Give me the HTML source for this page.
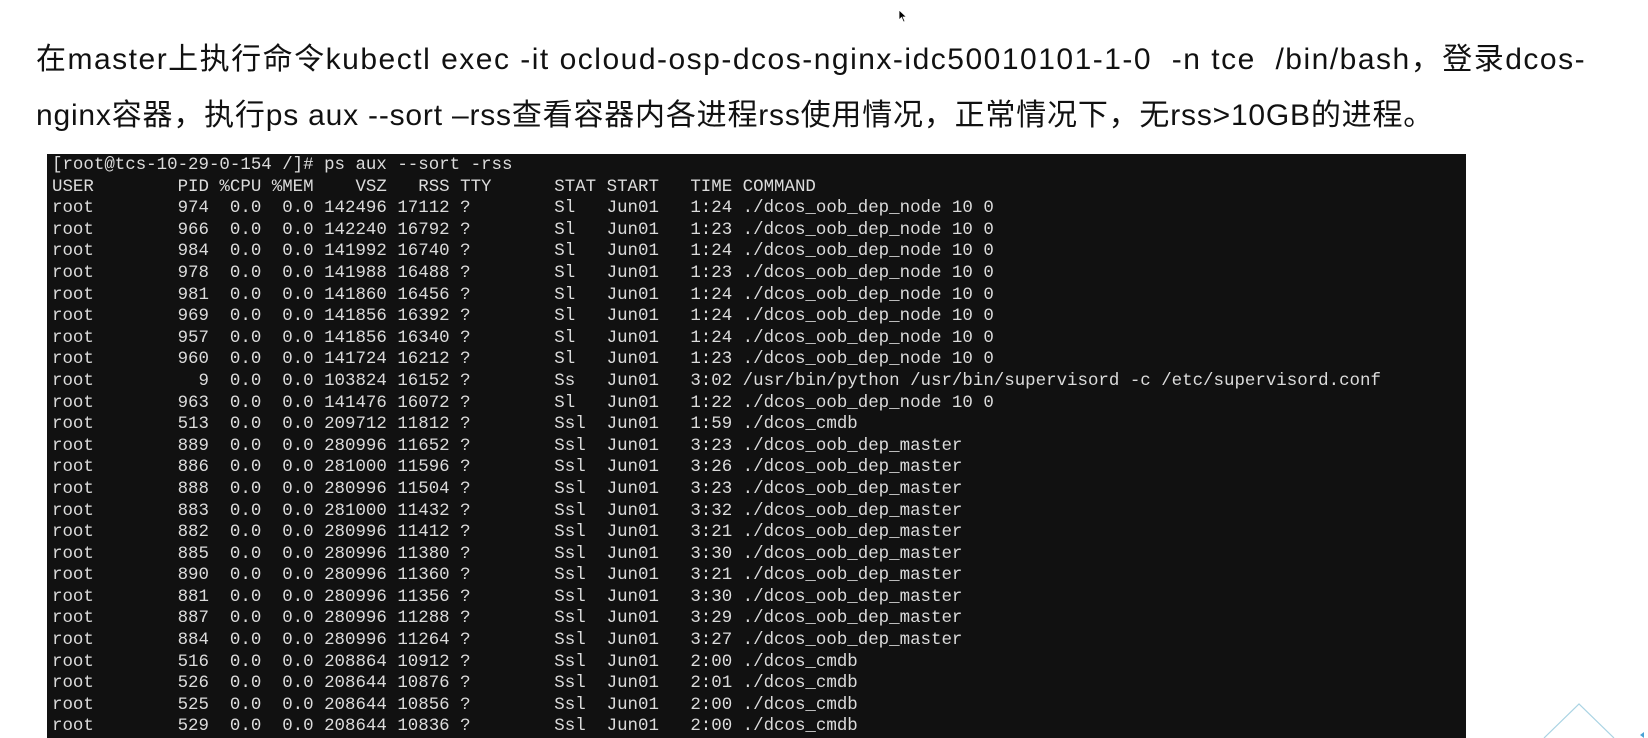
<!DOCTYPE html>
<html><head><meta charset="utf-8"><style>
html,body{margin:0;padding:0;background:#fff;width:1648px;height:738px;overflow:hidden;position:relative}
.h{position:absolute;left:36px;font-family:"Liberation Sans","Noto Sans CJK SC",sans-serif;font-size:30px;color:#111;white-space:nowrap;line-height:40px}
.term{position:absolute;left:47px;top:154px;width:1419px;height:600px;background:#111;}
pre{margin:0;position:absolute;left:5px;top:1px;font-family:"Liberation Mono",monospace;font-size:17.45px;line-height:21.6px;color:#dcdcdc}
</style></head><body>
<svg style="position:absolute;left:898px;top:9px" width="10" height="14" viewBox="0 0 10 14"><path d="M1 1 L1 11 L3.5 8.5 L5.5 13 L7 12.3 L5 8 L8.5 8 Z" fill="#000" stroke="#fff" stroke-width="0.8"/></svg>
<div class="h" style="top:40px;letter-spacing:1.5px">在master上执行命令kubectl exec -it ocloud-osp-dcos-nginx-idc50010101-1-0&nbsp; -n tce&nbsp; /bin/bash，登录dcos-</div>
<div class="h" style="top:96px;letter-spacing:0.8px">nginx容器，执行ps aux --sort –rss查看容器内各进程rss使用情况，正常情况下，无rss&gt;10GB的进程。</div>
<div class="term"><pre>[root@tcs-10-29-0-154 /]# ps aux --sort -rss
USER        PID %CPU %MEM    VSZ   RSS TTY      STAT START   TIME COMMAND
root        974  0.0  0.0 142496 17112 ?        Sl   Jun01   1:24 ./dcos_oob_dep_node 10 0
root        966  0.0  0.0 142240 16792 ?        Sl   Jun01   1:23 ./dcos_oob_dep_node 10 0
root        984  0.0  0.0 141992 16740 ?        Sl   Jun01   1:24 ./dcos_oob_dep_node 10 0
root        978  0.0  0.0 141988 16488 ?        Sl   Jun01   1:23 ./dcos_oob_dep_node 10 0
root        981  0.0  0.0 141860 16456 ?        Sl   Jun01   1:24 ./dcos_oob_dep_node 10 0
root        969  0.0  0.0 141856 16392 ?        Sl   Jun01   1:24 ./dcos_oob_dep_node 10 0
root        957  0.0  0.0 141856 16340 ?        Sl   Jun01   1:24 ./dcos_oob_dep_node 10 0
root        960  0.0  0.0 141724 16212 ?        Sl   Jun01   1:23 ./dcos_oob_dep_node 10 0
root          9  0.0  0.0 103824 16152 ?        Ss   Jun01   3:02 /usr/bin/python /usr/bin/supervisord -c /etc/supervisord.conf
root        963  0.0  0.0 141476 16072 ?        Sl   Jun01   1:22 ./dcos_oob_dep_node 10 0
root        513  0.0  0.0 209712 11812 ?        Ssl  Jun01   1:59 ./dcos_cmdb
root        889  0.0  0.0 280996 11652 ?        Ssl  Jun01   3:23 ./dcos_oob_dep_master
root        886  0.0  0.0 281000 11596 ?        Ssl  Jun01   3:26 ./dcos_oob_dep_master
root        888  0.0  0.0 280996 11504 ?        Ssl  Jun01   3:23 ./dcos_oob_dep_master
root        883  0.0  0.0 281000 11432 ?        Ssl  Jun01   3:32 ./dcos_oob_dep_master
root        882  0.0  0.0 280996 11412 ?        Ssl  Jun01   3:21 ./dcos_oob_dep_master
root        885  0.0  0.0 280996 11380 ?        Ssl  Jun01   3:30 ./dcos_oob_dep_master
root        890  0.0  0.0 280996 11360 ?        Ssl  Jun01   3:21 ./dcos_oob_dep_master
root        881  0.0  0.0 280996 11356 ?        Ssl  Jun01   3:30 ./dcos_oob_dep_master
root        887  0.0  0.0 280996 11288 ?        Ssl  Jun01   3:29 ./dcos_oob_dep_master
root        884  0.0  0.0 280996 11264 ?        Ssl  Jun01   3:27 ./dcos_oob_dep_master
root        516  0.0  0.0 208864 10912 ?        Ssl  Jun01   2:00 ./dcos_cmdb
root        526  0.0  0.0 208644 10876 ?        Ssl  Jun01   2:01 ./dcos_cmdb
root        525  0.0  0.0 208644 10856 ?        Ssl  Jun01   2:00 ./dcos_cmdb
root        529  0.0  0.0 208644 10836 ?        Ssl  Jun01   2:00 ./dcos_cmdb</pre></div>
<svg style="position:absolute;left:1540px;top:700px" width="108" height="38" viewBox="0 0 108 38"><path d="M4 38 L39 4 L74 38" fill="none" stroke="#a9d3e3" stroke-width="1.2"/><path d="M104 32 L100 35 L104 38 Z" fill="#4aa3d6"/></svg>
</body></html>
